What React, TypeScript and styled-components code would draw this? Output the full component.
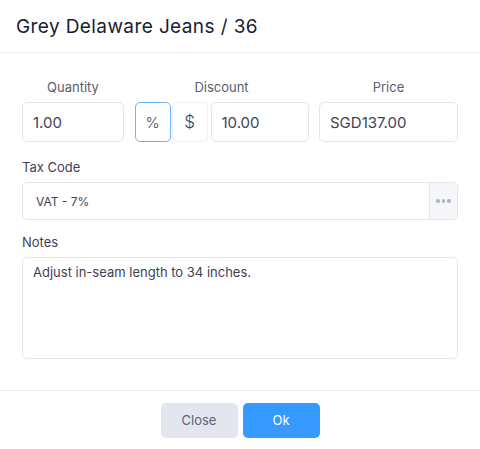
import { createGlobalStyle, styled } from 'styled-components';

const GlobalStyle = createGlobalStyle`
  html, body {
    margin: 0;
    padding: 0;
    background: #ffffff;
  }
  body {
    font-family: Inter, "Noto Sans", sans-serif;
    color: #3f4254;
  }
  * {
    box-sizing: border-box;
  }
`;

const Modal = styled.div`
  width: 480px;
  height: 449px;
  background: #ffffff;
  display: flex;
  flex-direction: column;
`;

const Header = styled.div`
  height: 53px;
  display: flex;
  align-items: center;
  padding: 0 16px;
  border-bottom: 1px solid #ebedf3;
`;

const Title = styled.h3`
  margin: 0;
  font-size: 19px;
  font-weight: 400;
  color: #181c32;
  letter-spacing: 0.4px;
`;

const Body = styled.div`
  flex: 1;
  padding: 24px 22px 0 22px;
  border-bottom: 1px solid #ebedf3;
`;

const TopRow = styled.div`
  display: grid;
  grid-template-columns: 102px 174px 139px;
  column-gap: 10.5px;
`;

const Field = styled.div<{ $center?: boolean }>`
  display: flex;
  flex-direction: column;
  align-items: ${p => (p.$center ? 'center' : 'stretch')};
  margin-bottom: ${p => (p.$center ? '0' : '12px')};
`;

const Label = styled.label<{ $muted?: boolean }>`
  font-size: 13px;
  line-height: 20px;
  color: ${p => (p.$muted ? '#595d6e' : '#3f4254')};
  margin-bottom: 5px;
`;

const Input = styled.div`
  width: 100%;
  height: 40px;
  display: flex;
  align-items: center;
  padding: 0 10px;
  border: 1px solid #e4e6ef;
  border-radius: 5px;
  font-size: 15px;
  color: #3f4254;
  background: #ffffff;
`;

const DiscountGroup = styled.div`
  width: 100%;
  display: flex;
  align-items: center;
`;

const ModeButton = styled.div<{ $active?: boolean }>`
  width: 36px;
  height: 40px;
  flex: none;
  display: flex;
  align-items: center;
  justify-content: center;
  margin-right: ${p => (p.$active ? '1px' : '3px')};
  border: 1px solid ${p => (p.$active ? '#69b3ff' : '#eceef4')};
  border-radius: 5px;
  font-size: ${p => (p.$active ? 15 : 17)}px;
  font-weight: 300;
  color: #3f4254;
`;

const DiscountInput = styled(Input)`
  flex: 1;
`;

const Select = styled.div`
  height: 38px;
  display: flex;
  border: 1px solid #e4e6ef;
  border-radius: 5px;
  overflow: hidden;
`;

const SelectValue = styled.div`
  flex: 1;
  display: flex;
  align-items: center;
  padding: 0 13px;
  font-size: 12px;
  color: #3f4254;
`;

const DotsButton = styled.div`
  width: 28px;
  display: flex;
  align-items: center;
  justify-content: center;
  gap: 2px;
  background: #f5f6f9;
  border-left: 1px solid #e4e6ef;
`;

const Dot = styled.span`
  width: 3.5px;
  height: 3.5px;
  border-radius: 50%;
  background: #b5b5c3;
`;

const TextArea = styled.div`
  height: 102px;
  padding: 4px 10px;
  border: 1px solid #e4e6ef;
  border-radius: 5px;
  font-size: 13px;
  line-height: 20px;
  color: #3f4254;
`;

const Footer = styled.div`
  height: 58px;
  display: flex;
  align-items: center;
  justify-content: center;
  gap: 5px;
`;

const Button = styled.button<{ $primary?: boolean }>`
  width: 77px;
  height: 35px;
  border: none;
  border-radius: 5px;
  font-family: Inter, "Noto Sans", sans-serif;
  font-size: 13px;
  background: ${p => (p.$primary ? '#3699ff' : '#e4e6ef')};
  color: ${p => (p.$primary ? '#ffffff' : '#5e6278')};
  cursor: pointer;
`;

const TaxField = styled(Field)`
  margin-top: 15px;
`;

export default function App() {
  return (
    <>
      <GlobalStyle />
      <Modal>
        <Header>
          <Title>Grey Delaware Jeans / 36</Title>
        </Header>
        <Body>
          <TopRow>
            <Field $center>
              <Label $muted>Quantity</Label>
              <Input>1.00</Input>
            </Field>
            <Field $center>
              <Label $muted>Discount</Label>
              <DiscountGroup>
                <ModeButton $active>%</ModeButton>
                <ModeButton>$</ModeButton>
                <DiscountInput>10.00</DiscountInput>
              </DiscountGroup>
            </Field>
            <Field $center>
              <Label $muted>Price</Label>
              <Input>SGD137.00</Input>
            </Field>
          </TopRow>
          <TaxField>
            <Label>Tax Code</Label>
            <Select>
              <SelectValue>VAT - 7%</SelectValue>
              <DotsButton>
                <Dot />
                <Dot />
                <Dot />
              </DotsButton>
            </Select>
          </TaxField>
          <Field>
            <Label>Notes</Label>
            <TextArea>Adjust in-seam length to 34 inches.</TextArea>
          </Field>
        </Body>
        <Footer>
          <Button>Close</Button>
          <Button $primary>Ok</Button>
        </Footer>
      </Modal>
    </>
  );
}
